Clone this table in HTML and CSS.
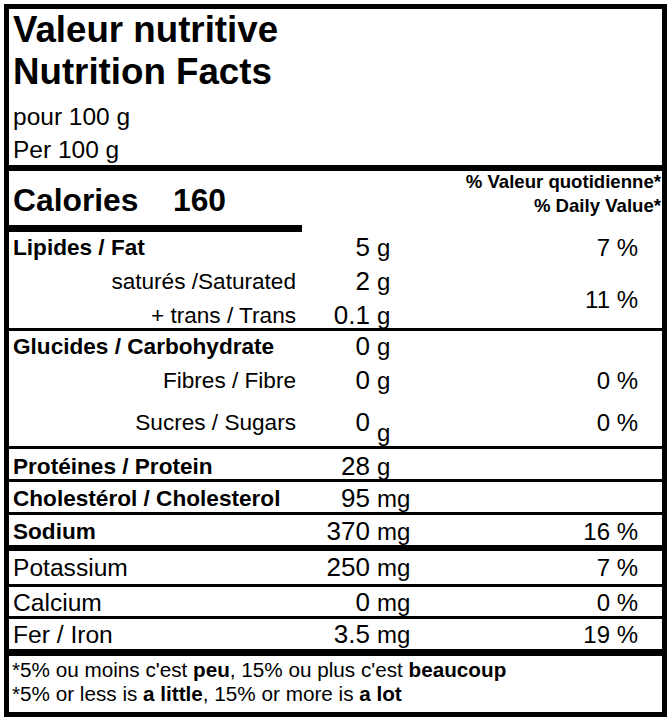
FILE: index.html
```html
<!DOCTYPE html>
<html lang="fr">
<head>
<meta charset="utf-8">
<title>Valeur nutritive / Nutrition Facts</title>
<link rel="stylesheet" href="styles.css">
</head>
<body>
<div class="label">
  <header class="head">
    <h1 class="title">Valeur nutritive<br>Nutrition Facts</h1>
    <p class="serving">pour 100 g<br>Per 100 g</p>
  </header>

  <section class="cal">
    <div class="cal-main"><span class="cal-word">Calories</span><span>160</span></div>
    <div class="dv-head">% Valeur quotidienne*<br>% Daily Value*</div>
  </section>
  <div class="cal-bar"></div>

  <section class="grp grp-fat">
    <div class="lbl b">Lipides / Fat</div><div class="num">5</div><div class="unit">g</div><div class="pct">7 %</div>
    <div class="lbl sub">saturés /Saturated</div><div class="num">2</div><div class="unit">g</div><div class="pct span2">11 %</div>
    <div class="lbl sub">+ trans / Trans</div><div class="num">0.1</div><div class="unit">g</div>
  </section>

  <section class="grp grp-carb">
    <div class="lbl b">Glucides / Carbohydrate</div><div class="num">0</div><div class="unit">g</div><div class="pct"></div>
    <div class="lbl sub">Fibres / Fibre</div><div class="num">0</div><div class="unit">g</div><div class="pct">0 %</div>
    <div class="lbl sub low">Sucres / Sugars</div><div class="num low">0</div><div class="unit low"><span class="drop">g</span></div><div class="pct low">0 %</div>
  </section>

  <section class="grp one prot">
    <div class="lbl b">Protéines / Protein</div><div class="num">28</div><div class="unit">g</div><div class="pct"></div>
  </section>

  <section class="grp one chol">
    <div class="lbl b">Cholestérol / Cholesterol</div><div class="num">95</div><div class="unit">mg</div><div class="pct"></div>
  </section>

  <section class="grp one sod">
    <div class="lbl b">Sodium</div><div class="num">370</div><div class="unit">mg</div><div class="pct">16 %</div>
  </section>

  <section class="grp one pot">
    <div class="lbl min">Potassium</div><div class="num">250</div><div class="unit">mg</div><div class="pct">7 %</div>
  </section>

  <section class="grp one calc">
    <div class="lbl min">Calcium</div><div class="num">0</div><div class="unit">mg</div><div class="pct">0 %</div>
  </section>

  <section class="grp one fer">
    <div class="lbl min">Fer / Iron</div><div class="num">3.5</div><div class="unit">mg</div><div class="pct">19 %</div>
  </section>

  <footer class="foot">
    <p>*5% ou moins c'est <b>peu</b>, 15% ou plus c'est <b>beaucoup</b></p>
    <p>*5% or less is <b>a little</b>, 15% or more is <b>a lot</b></p>
  </footer>
</div>
</body>
</html>
```

FILE: styles.css
```css
body {
  margin: 0;
  padding: 4px;
  background: #fff;
  color: #000;
  font-family: "Liberation Sans", Arial, sans-serif;
}

.label {
  width: 663px;
  box-sizing: border-box;
  border: 5px solid #000;
  background: #fff;
}

/* Header */
.head {
  height: 156px;
  padding-left: 4px;
  border-bottom: 6px solid #000;
}

.title {
  margin: 0;
  font-size: 36.7px;
  font-weight: bold;
  line-height: 42px;
}

.serving {
  margin: 7px 0 0;
  font-size: 24.5px;
  line-height: 33px;
}

/* Calories */
.cal {
  height: 54px;
  display: flex;
  justify-content: space-between;
  align-items: flex-start;
  padding: 0 1px 0 4px;
}

.cal-main {
  padding-top: 12px;
  font-size: 31.8px;
  font-weight: bold;
  line-height: 34px;
}

.cal-word {
  display: inline-block;
  width: 160px;
}

.dv-head {
  margin-top: -1px;
  text-align: right;
  font-size: 18.6px;
  font-weight: bold;
  line-height: 24px;
}

.cal-bar {
  width: 293px;
  height: 7px;
  background: #000;
}

/* Nutrient groups */
.grp {
  display: grid;
  grid-template-columns: 285px 72px 67px 1fr;
  align-items: start;
  padding: 0 24px 0 4px;
  border-bottom: 3px solid #000;
  font-size: 24px;
  line-height: 27px;
}

.grp > div {
  padding-top: 2px;
}

.lbl {
  font-size: 22.6px;
  white-space: nowrap;
}

.lbl.b {
  font-weight: bold;
}

.lbl.sub {
  text-align: right;
  padding-right: 2px;
}

.lbl.min {
  font-size: 24.6px;
}

.num {
  text-align: right;
  font-size: 26px;
}

.unit {
  padding-left: 7px;
}

.pct {
  text-align: right;
}

.grp > .pct.span2 {
  grid-row: span 2;
  align-self: center;
  padding-top: 4px;
}

.grp-fat {
  grid-template-rows: 34px 34px 28px;
}

.grp-carb {
  grid-template-rows: 34px 34px 47px;
}

.grp > .low {
  padding-top: 10px;
}

.drop {
  vertical-align: -10px;
}

.one.prot {
  grid-template-rows: 30px;
}
.one.prot > div { padding-top: 4px; }

.one.chol {
  grid-template-rows: 30px;
}
.one.chol > div { padding-top: 3px; }

.one.sod {
  grid-template-rows: 30px;
  border-bottom-width: 6px;
}
.one.sod > div { padding-top: 3px; }

.one.pot {
  grid-template-rows: 33px;
}
.one.pot > div { padding-top: 3px; }

.one.calc {
  grid-template-rows: 29px;
}
.one.calc > div { padding-top: 2px; }

.one.fer {
  grid-template-rows: 30px;
  border-bottom-width: 7px;
}
.one.fer > div { padding-top: 2px; }

/* Footer */
.foot {
  height: 56px;
  padding: 2px 0 0 3px;
  box-sizing: border-box;
  font-size: 20.7px;
  line-height: 24px;
}

.foot p {
  margin: 0;
  white-space: nowrap;
}
```
